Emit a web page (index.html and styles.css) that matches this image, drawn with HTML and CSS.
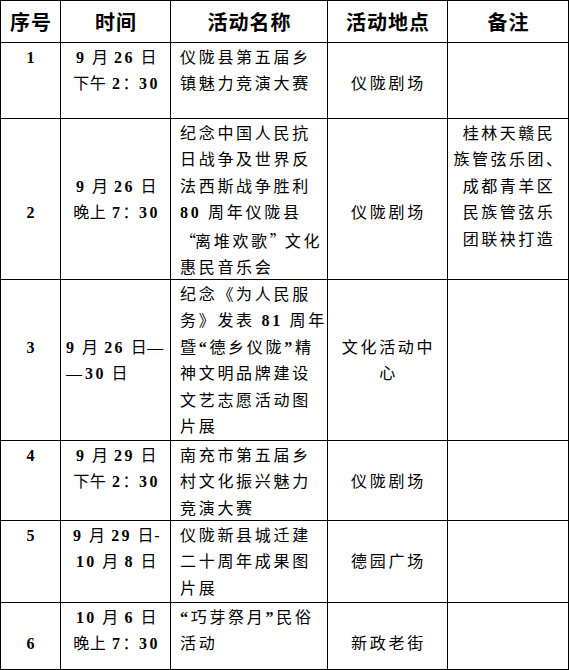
FILE: index.html
```html
<!DOCTYPE html>
<html lang="zh-CN">
<head>
<meta charset="utf-8">
<title>活动安排</title>
<link rel="stylesheet" href="styles.css">
</head>
<body>
<table class="sched">
  <colgroup>
    <col class="c-seq">
    <col class="c-time">
    <col class="c-name">
    <col class="c-loc">
    <col class="c-note">
  </colgroup>
  <thead>
    <tr class="r-head">
      <th>序号</th>
      <th>时间</th>
      <th>活动名称</th>
      <th>活动地点</th>
      <th>备注</th>
    </tr>
  </thead>
  <tbody>
    <tr class="r1">
      <td class="seq">1</td>
      <td class="time"><b class="n">9</b> 月 <b class="n">26</b> 日<br>下午 <b class="n">2</b>：<b class="n">30</b></td>
      <td class="name"><div class="tx">仪陇县第五届乡<br>镇魅力竞演大赛</div></td>
      <td class="loc o1">仪陇剧场</td>
      <td class="note"></td>
    </tr>
    <tr class="r2">
      <td class="seq o3">2</td>
      <td class="time o2"><b class="n">9</b> 月 <b class="n">26</b> 日<br>晚上 <b class="n">7</b>：<b class="n">30</b></td>
      <td class="name"><div class="tx">纪念中国人民抗<br>日战争及世界反<br>法西斯战争胜利<br><b class="n">80</b> 周年仪陇县<br><span class="fw">“</span>离堆欢歌<span class="fw">”</span>文化<br>惠民音乐会</div></td>
      <td class="loc o3">仪陇剧场</td>
      <td class="note"><div class="tx">桂林天赣民<br>族管弦乐团、<br>成都青羊区<br>民族管弦乐<br>团联袂打造</div></td>
    </tr>
    <tr class="r3">
      <td class="seq o2">3</td>
      <td class="time o2 left"><b class="n">9</b> 月 <b class="n">26</b> 日<span class="dash">—</span><br><span class="dash">—</span><b class="n">30</b> 日</td>
      <td class="name"><div class="tx">纪念《为人民服<br>务》发表 <b class="n">81</b> 周年<br>暨<span class="q">“</span>德乡仪陇<span class="q">”</span>精<br>神文明品牌建设<br>文艺志愿活动图<br>片展</div></td>
      <td class="loc o2">文化活动中<br>心</td>
      <td class="note"></td>
    </tr>
    <tr class="r4">
      <td class="seq">4</td>
      <td class="time"><b class="n">9</b> 月 <b class="n">29</b> 日<br>下午 <b class="n">2</b>：<b class="n">30</b></td>
      <td class="name"><div class="tx">南充市第五届乡<br>村文化振兴魅力<br>竞演大赛</div></td>
      <td class="loc o1">仪陇剧场</td>
      <td class="note"></td>
    </tr>
    <tr class="r5">
      <td class="seq">5</td>
      <td class="time"><b class="n">9</b> 月 <b class="n">29</b> 日-<br><b class="n">10</b> 月 <b class="n">8</b> 日</td>
      <td class="name"><div class="tx">仪陇新县城迁建<br>二十周年成果图<br>片展</div></td>
      <td class="loc o1">德园广场</td>
      <td class="note"></td>
    </tr>
    <tr class="r6">
      <td class="seq o1">6</td>
      <td class="time"><b class="n">10</b> 月 <b class="n">6</b> 日<br>晚上 <b class="n">7</b>：<b class="n">30</b></td>
      <td class="name"><div class="tx"><span class="q">“</span>巧芽祭月<span class="q">”</span>民俗<br>活动</div></td>
      <td class="loc o1">新政老街</td>
      <td class="note"></td>
    </tr>
  </tbody>
</table>
</body>
</html>
```

FILE: styles.css
```css
html, body {
  margin: 0;
  padding: 0;
  background: #ffffff;
}

body {
  font-family: "Liberation Serif", "Noto Sans CJK SC", serif;
  color: #000;
  font-size: 16px;
}

.sched {
  border-collapse: collapse;
  table-layout: fixed;
  width: 568px;
}

.c-seq { width: 60px; }
.c-time { width: 110px; }
.c-name { width: 157px; }
.c-loc { width: 120px; }
.c-note { width: 121px; }

.sched th,
.sched td {
  border: 1px solid #000;
  padding: 0;
}

.r-head { height: 42px; }
.r1 { height: 76px; }
.r2 { height: 161px; }
.r3 { height: 161px; }
.r4 { height: 80px; }
.r5 { height: 82px; }
.r6 { height: 67px; }

.sched th {
  font-family: "Noto Sans CJK SC", sans-serif;
  font-weight: 700;
  font-size: 20px;
  letter-spacing: 1px;
  text-align: center;
  vertical-align: middle;
  line-height: 24px;
  padding-left: 1px;
}

.sched td {
  vertical-align: top;
  line-height: 26.4px;
  padding-top: 2px;
  white-space: nowrap;
}

.tx {
  margin-bottom: -10px;
}

.sched td.o1 { padding-top: 28.4px; }
.sched td.o2 { padding-top: 54.8px; }
.sched td.o3 { padding-top: 81.2px; }

.seq {
  text-align: center;
  font-weight: 700;
}

.sched td.time {
  text-align: center;
  letter-spacing: 0.6px;
  word-spacing: 1px;
  padding-left: 2px;
}

.sched td.left {
  text-align: left;
  padding-left: 5px;
}

.n {
  font-family: "Liberation Serif", serif;
  font-weight: 700;
  letter-spacing: 2.4px;
}

.dash {
  font-family: "Liberation Serif", serif;
  letter-spacing: 3px;
}

.sched td.name {
  padding-left: 9px;
  letter-spacing: 2.7px;
  text-align: left;
}

.name .n {
  letter-spacing: 2.7px;
}

.fw {
  font-family: "Noto Sans CJK SC", sans-serif;
  letter-spacing: -1px;
}

.q {
  font-family: "Liberation Serif", serif;
  font-weight: 700;
}

.sched td.loc {
  text-align: center;
  letter-spacing: 2.7px;
  padding-left: 2px;
}

.sched td.note {
  text-align: center;
  letter-spacing: 2.5px;
  padding-left: 2px;
}
```
